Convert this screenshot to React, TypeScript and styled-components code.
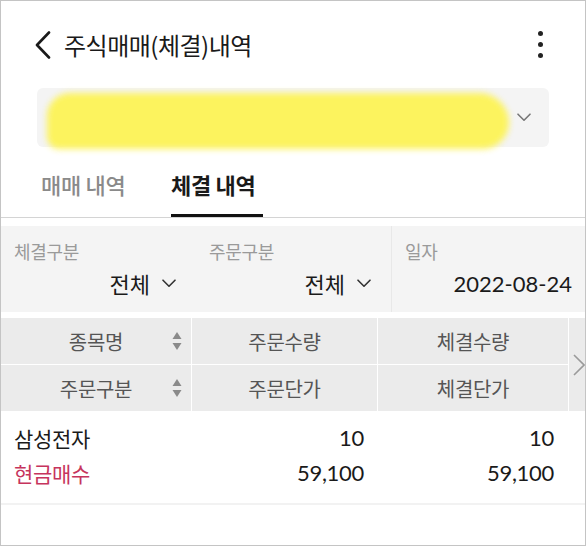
import React from "react";
import styled, { createGlobalStyle } from "styled-components";

const GlobalStyle = createGlobalStyle`
  html, body {
    margin: 0;
    padding: 0;
    background: #ffffff;
  }
  * {
    box-sizing: border-box;
  }
`;

const Screen = styled.div`
  width: 586px;
  height: 546px;
  border: 1px solid #c4c4c4;
  background: #fff;
  overflow: hidden;
  font-family: Lato, "Noto Sans CJK KR", sans-serif;
  color: #1a1a1a;
`;

const Header = styled.header`
  height: 87px;
  display: flex;
  align-items: center;
  padding: 0 0 0 34px;
`;

const BackButton = styled.button`
  border: none;
  background: none;
  padding: 0;
  width: 20px;
  height: 30px;
  display: flex;
  align-items: center;
  margin-right: 9px;
  cursor: pointer;
`;

const Title = styled.h1`
  flex: 1;
  margin: 0;
  font-family: "Noto Sans CJK KR", sans-serif;
  font-weight: 400;
  font-size: 24px;
  letter-spacing: -0.5px;
  color: #1a1a1a;
`;

const MoreButton = styled.button`
  border: none;
  background: none;
  width: 20px;
  margin-right: 35px;
  display: flex;
  flex-direction: column;
  align-items: center;
  gap: 6px;
  padding: 0;
  span {
    width: 5px;
    height: 5px;
    border-radius: 50%;
    background: #222;
  }
`;

const AccountWrap = styled.div`
  position: relative;
  margin: 0 36px 0 36px;
`;

const AccountBox = styled.div`
  height: 59px;
  background: #f4f4f4;
  border-radius: 6px;
  display: flex;
  align-items: center;
  justify-content: flex-end;
  padding-right: 18px;
`;

const Highlight = styled.div`
  position: absolute;
  left: 10px;
  top: 5px;
  width: 462px;
  height: 56px;
  background: #fdf356;
  border-radius: 26px 34px 30px 14px;
  filter: blur(3px);
  opacity: 0.95;
`;

const Tabs = styled.nav`
  display: flex;
  gap: 38px;
  padding: 0 0 0 40px;
  margin-top: 3px;
  border-bottom: 1px solid #d4d4d4;
`;

const Tab = styled.div<{ $active?: boolean }>`
  height: 67px;
  display: flex;
  align-items: center;
  padding-top: 4px;
  font-family: "Noto Sans CJK KR", sans-serif;
  font-size: 22px;
  letter-spacing: -0.3px;
  font-weight: ${(p) => (p.$active ? 700 : 500)};
  color: ${(p) => (p.$active ? "#1a1a1a" : "#8a8a8a")};
  border-bottom: 3px solid ${(p) => (p.$active ? "#111" : "transparent")};
  width: 92px;
`;

const Filters = styled.div`
  margin-top: 8px;
  height: 86px;
  background: #f4f4f4;
  display: grid;
  grid-template-columns: 195px 195px 1fr;
`;

const FilterCell = styled.div<{ $divider?: boolean }>`
  display: flex;
  flex-direction: column;
  padding: 10px 13px 0 13px;
  border-left: ${(p) => (p.$divider ? "1px solid #e8e8e8" : "none")};
`;

const FilterLabel = styled.div`
  font-family: "Noto Sans CJK KR", sans-serif;
  font-size: 18px;
  letter-spacing: -0.3px;
  color: #9a9a9a;
  height: 30px;
  line-height: 30px;
`;

const FilterValue = styled.div`
  display: flex;
  justify-content: flex-end;
  align-items: center;
  gap: 12px;
  height: 34px;
  font-size: 22px;
  color: #1a1a1a;
  padding-right: 7px;
`;

const ValueRight = styled(FilterValue)`
  padding-right: 0;
`;

const Grid = styled.div`
  display: grid;
  grid-template-columns: 190px 185px 190px 1fr;
`;

const HeadGrid = styled(Grid)`
  margin-top: 6px;
  background: #ffffff;
  gap: 1px;
`;

const HeadCell = styled.div`
  height: 46px;
  background: #ebebeb;
  display: flex;
  align-items: center;
  justify-content: center;
  position: relative;
  font-family: "Noto Sans CJK KR", sans-serif;
  font-size: 20px;
  letter-spacing: -0.3px;
  color: #555;
`;

const SortIcon = styled.svg`
  position: absolute;
  right: 9px;
  top: 50%;
  transform: translateY(-50%);
`;

const MoreCol = styled.div`
  grid-row: 1 / span 2;
  grid-column: 4;
  background: #ebebeb;
  display: flex;
  align-items: center;
  justify-content: flex-end;
`;

const Row = styled(Grid)`
  padding: 9px 0 13px;
  border-bottom: 2px solid #f2f2f2;
`;

const Cell = styled.div<{ $right?: boolean; $red?: boolean }>`
  height: 35px;
  display: flex;
  align-items: center;
  justify-content: ${(p) => (p.$right ? "flex-end" : "flex-start")};
  padding: ${(p) => (p.$right ? "0 12px 0 0" : "0 0 0 13px")};
  font-size: ${(p) => (p.$right ? "22px" : "21px")};
  letter-spacing: -0.3px;
  color: ${(p) => (p.$red ? "#c6345d" : "#1a1a1a")};
`;

const Chevron = ({ size = 13, color = "#333" }: { size?: number; color?: string }) => (
  <svg width={size} height={size * 0.6} viewBox="0 0 14 8">
    <path d="M1 1 L7 7 L13 1" fill="none" stroke={color} strokeWidth="1.6" strokeLinecap="round" strokeLinejoin="round" />
  </svg>
);

const Sort = () => (
  <SortIcon width="10" height="20" viewBox="0 0 10 20">
    <path d="M5 1 L9.5 8 L0.5 8 Z" fill="#8a8a8a" />
    <path d="M0.5 12 L9.5 12 L5 19 Z" fill="#8a8a8a" />
  </SortIcon>
);

const heads = [
  ["종목명", "주문수량", "체결수량"],
  ["주문구분", "주문단가", "체결단가"],
];

export default function App() {
  return (
    <>
      <GlobalStyle />
      <Screen>
        <Header>
          <BackButton>
            <svg width="16" height="28" viewBox="0 0 16 28">
              <path d="M14 1.5 L2 14 L14 26.5" fill="none" stroke="#1a1a1a" strokeWidth="2.6" strokeLinecap="round" strokeLinejoin="round" />
            </svg>
          </BackButton>
          <Title>주식매매(체결)내역</Title>
          <MoreButton>
            <span />
            <span />
            <span />
          </MoreButton>
        </Header>

        <AccountWrap>
          <AccountBox>
            <Chevron size={14} color="#777" />
          </AccountBox>
          <Highlight />
        </AccountWrap>

        <Tabs>
          <Tab>매매 내역</Tab>
          <Tab $active>체결 내역</Tab>
        </Tabs>

        <Filters>
          <FilterCell>
            <FilterLabel>체결구분</FilterLabel>
            <FilterValue>
              전체 <Chevron size={14} />
            </FilterValue>
          </FilterCell>
          <FilterCell>
            <FilterLabel>주문구분</FilterLabel>
            <FilterValue>
              전체 <Chevron size={14} />
            </FilterValue>
          </FilterCell>
          <FilterCell $divider>
            <FilterLabel>일자</FilterLabel>
            <ValueRight>2022-08-24</ValueRight>
          </FilterCell>
        </Filters>

        <HeadGrid>
          {heads.map((row, r) =>
            row.map((h, i) => (
              <HeadCell key={`${r}-${i}`} style={{ gridRow: r + 1, gridColumn: i + 1 }}>
                <span>{h}</span>
                {i === 0 && <Sort />}
              </HeadCell>
            ))
          )}
          <MoreCol>
            <svg width="12" height="24" viewBox="0 0 12 24">
              <path d="M1 2 L11 12 L1 22" fill="none" stroke="#9a9a9a" strokeWidth="1.6" />
            </svg>
          </MoreCol>
        </HeadGrid>

        <Row>
          <Cell>삼성전자</Cell>
          <Cell $right>10</Cell>
          <Cell $right>10</Cell>
          <div />
          <Cell $red>현금매수</Cell>
          <Cell $right>59,100</Cell>
          <Cell $right>59,100</Cell>
          <div />
        </Row>
      </Screen>
    </>
  );
}
